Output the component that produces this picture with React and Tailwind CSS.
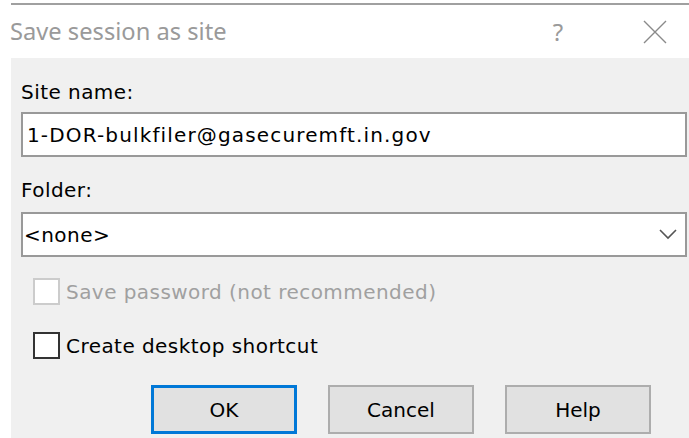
import React from "react";

// WinSCP-style "save session" dialog
function Checkbox({ label, disabled }) {
  return (
    <label className="flex items-center gap-[6px]">
      <span
        className={`block w-[27px] h-[27px] bg-white border-2 ${
          disabled ? "border-[#cccccc]" : "border-[#333333]"
        }`}
      />
      <span className={disabled ? "text-[#a0a0a0]" : "text-black"}>{label}</span>
    </label>
  );
}

function Button({ children, primary }) {
  return (
    <button
      className={`w-[146px] h-[49px] bg-[#e1e1e1] text-black tracking-normal ${
        primary ? "border-[3px] border-[#0078d7]" : "border-2 border-[#adadad]"
      }`}
    >
      {children}
    </button>
  );
}

export default function App() {
  return (
    <div className="w-[689px] h-[438px] bg-white flex flex-col overflow-hidden">
      {/* top edge of the parent window */}
      <div className="pl-[11px] pt-[3px]">
        <div className="h-[2px] bg-[#a0a0a0]" />
      </div>

      {/* title bar */}
      <div className="h-[53px] flex items-center pl-[10px] text-[#9a9a9a] font-['Noto_Sans',sans-serif]">
        <span className="text-[23.7px] flex-1">Save session as site</span>
        <span className="text-[24px] w-[20px] mr-[75px] text-center">?</span>
        <svg width="24" height="24" viewBox="0 0 24 24" className="mr-[22px]">
          <path d="M1 1 L23 23 M23 1 L1 23" stroke="#8a8a8a" strokeWidth="1.4" fill="none" />
        </svg>
      </div>

      {/* dialog body */}
      <div className="flex-1 ml-[11px] bg-[#f0f0f0] pl-[10px] pr-[2px] text-[20px] leading-[24px] tracking-[0.45px] text-black font-['DejaVu_Sans',sans-serif]">
        <div className="pt-[22px]">Site name:</div>
        <div className="mt-[8px] h-[45px] border-2 border-[#999999] bg-white flex items-center px-[4px] tracking-[1.15px]">
          1-DOR-bulkfiler@gasecuremft.in.gov
        </div>

        <div className="mt-[21px]">Folder:</div>
        <div className="mt-[10px] h-[45px] border-2 border-[#999999] bg-white flex items-center pl-[1px] pr-[8px]">
          <span className="flex-1">&lt;none&gt;</span>
          <svg width="18" height="11" viewBox="0 0 18 11">
            <path d="M1 1 L9 9 L17 1" stroke="#555555" strokeWidth="1.6" fill="none" />
          </svg>
        </div>

        <div className="mt-[21px] pl-[12px] flex flex-col gap-[27px]">
          <Checkbox label="Save password (not recommended)" disabled />
          <Checkbox label="Create desktop shortcut" />
        </div>

        <div className="mt-[26px] flex pl-[130px] gap-[31px]">
          <Button primary>OK</Button>
          <Button>Cancel</Button>
          <Button>Help</Button>
        </div>
      </div>
    </div>
  );
}
